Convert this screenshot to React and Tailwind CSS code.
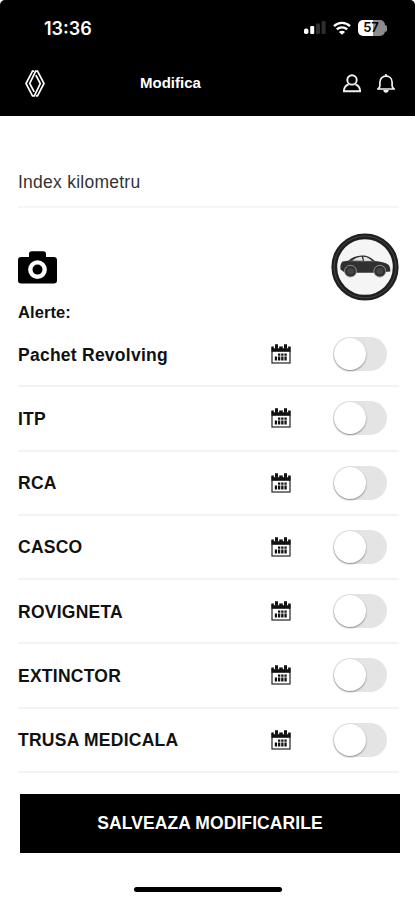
import { useState } from "react";

const alerts = [
    'Pachet Revolving',
    'ITP',
    'RCA',
    'CASCO',
    'ROVIGNETA',
    'EXTINCTOR',
    'TRUSA MEDICALA',
];

function SignalIcon() {
    return (
        <svg width="22" height="14" viewBox="0 0 22 14">
            <rect x="0" y="7.5" width="4.4" height="5.5" rx="1.8" fill="#fff" />
            <rect x="6.2" y="5" width="4" height="8" rx="1" fill="#fff" />
            <rect x="12" y="2.5" width="4" height="10.5" rx="1" fill="#2e2e2e" />
            <rect x="17.6" y="0" width="4" height="13" rx="1" fill="#2e2e2e" />
        </svg>
    );
}

function WifiIcon() {
    return (
        <svg width="18" height="14" viewBox="0 0 18 14" fill="none" stroke="#fff" strokeWidth="2.4">
            <path d="M1 5.2C5.4.8 12.6.8 17 5.2" />
            <path d="M3.8 8.4c2.8-2.7 7.600-2.700 10.400 0" />
            <path d="M9 13.800 5.900 10.900c1.600-1.500 4.600-1.500 6.200 0z" fill="#fff" stroke="none" />
        </svg>
    );
}

function Battery() {
    return (
        <div className="flex items-center">
            <div className="flex h-4 w-[27px] items-center justify-center rounded-[5px] bg-linear-to-r from-white from-57% to-[#8c8c8c] to-57% font-['Inter',sans-serif] text-[13px] font-semibold text-black">
                57
            </div>
            <div className="h-[7px] w-[2.5px] rounded-r-full bg-[#8c8c8c]" />
        </div>
    );
}

function Logo() {
    return (
        <svg width="20" height="27" viewBox="0 0 20 27" fill="none" stroke="#fff" strokeWidth="1.7">
            <path d="M9.200 1.100H7.500L1 13.500l6.500 12.400h1.800l6-12.400-4.500-8.300" />
            <path d="M10.800 25.900h1.700L19 13.500 12.500 1.100h-1.800l-6 12.400 4.500 8.300" />
        </svg>
    );
}

function UserIcon() {
    return (
        <svg width="18" height="19" viewBox="0 0 18 19" fill="none" stroke="#f2f2f2" strokeWidth="1.9">
            <circle cx="9" cy="5.9" r="4.7" />
            <path d="M5.600 10.400C2.800 11.500.9 13.900.9 17.300h16.200c0-3.400-1.900-5.800-4.700-6.900" strokeLinejoin="round" />
        </svg>
    );
}

function BellIcon() {
    return (
        <svg width="18" height="19" viewBox="0 0 18 19" fill="none" stroke="#f2f2f2" strokeWidth="1.7">
            <path d="M9 .2v2" strokeWidth="2.2" />
            <path d="M2.900 11.800V8.200C2.900 4.600 5.500 2.100 9 2.100s6.100 2.500 6.100 6.100v3.600c0 1.400.8 2.200 1.900 3.200H1c1.100-1 1.900-1.800 1.900-3.200z" />
            <path d="M6.300 16h5.400c0 1.600-1.100 2.700-2.700 2.700S6.300 17.600 6.300 16z" fill="#f2f2f2" stroke="none" />
        </svg>
    );
}

function CameraIcon() {
    return (
        <svg width="39" height="33" viewBox="0 0 39 33">
            <path d="M3 6h8V3c0-1.700 1.100-2.700 2.700-2.700h11.600C27 .3 28 1.300 28 3v3h8c1.800 0 3 1.200 3 3v20.700c0 1.700-1.200 2.800-3 2.800H3c-1.800 0-3-1.100-3-2.800V9c0-1.800 1.200-3 3-3z" fill="#000" />
            <circle cx="19.500" cy="18.600" r="7.200" fill="#000" stroke="#fff" strokeWidth="4.400" />
        </svg>
    );
}

function CarBadge() {
    return (
        <svg width="68" height="68" viewBox="0 0 68 68">
            <circle cx="34" cy="34" r="30.700" fill="#f5f5f5" stroke="#1f1f1f" strokeWidth="5.800" />
            <circle cx="34" cy="34" r="30.900" fill="none" stroke="#555" strokeWidth=".7" />
            <path d="M9.500 36.500c-.5-3.500.3-6.500 2-8l5.500-.8c3.500-3 8-5 14-5.200 6-.2 9.500 2.500 13 5.500 5.500.6 10.500 1.500 13.500 3.800 1.600 2 2 4.500 1.800 6.700L46 39.700H14z" fill="#303030" />
            <path d="M21 27.700c3.200-2.600 6.500-3.800 9.800-3.900l1 3.900zM33 27.900l-.7-4.100c3.700 0 6.300 1.800 8.700 4.200z" fill="#e4e4e0" />
            <path d="M17 27.800c9 .6 18 .6 27 .4" stroke="#777" strokeWidth=".6" fill="none" />
            <circle cx="19.500" cy="38.200" r="5.900" fill="#303030" stroke="#aaa89f" strokeWidth=".8" />
            <circle cx="48.800" cy="38.200" r="5.900" fill="#303030" stroke="#aaa89f" strokeWidth=".8" />
            <circle cx="19.500" cy="38.200" r="3.300" fill="#474541" />
            <circle cx="48.800" cy="38.200" r="3.300" fill="#474541" />
        </svg>
    );
}

function CalendarIcon() {
    return (
        <svg width="20" height="20" viewBox="0 0 20 20">
            <rect x="1" y="3.500" width="18" height="15.500" fill="#fff" stroke="#222" strokeWidth="1.200" />
            <path d="M.5 2.500h19v5.300H.5z" fill="#111" />
            <path d="M2.800 1.800h5.400v2.400H2.800zM11.800 1.800h5.400v2.400h-5.400z" fill="#fff" />
            <path d="M4 .3h3v4.500H4zM13 .3h3v4.500h-3z" fill="#111" />
            <path d="M7 9.500h2.300v2.300H7zM10.200 9.500h2.300v2.300h-2.300zM13.400 9.500h2.300v2.300h-2.300zM3.800 12.500h2.300v3.900H3.800zM7 12.500h2.300v3.900H7zM10.200 12.500h2.300v3.900h-2.300zM13.400 12.500h2.300v3.900h-2.300z" fill="#111" />
        </svg>
    );
}

function Toggle({ label, checked, onChange }) {
    return (
        <button
            type="button"
            role="switch"
            aria-label={label}
            aria-checked={checked}
            onClick={onChange}
            className={`flex h-[34px] w-[54px] items-center rounded-full px-px ${
                checked ? 'justify-end bg-black' : 'justify-start bg-[#e4e4e4]'
            }`}
        >
            <span className="size-8 rounded-full bg-white shadow-[0_1px_2px_rgba(0,0,0,0.4)]" />
        </button>
    );
}

function App() {
    const [active, setActive] = useState({});

    const handleToggle = (name) => {
        setActive((prev) => ({ ...prev, [name]: !prev[name] }));
    };

    return (
        <div className="h-[900px] w-[415px] overflow-hidden bg-white font-['Liberation_Sans',Arial,sans-serif] text-[#111]">
            <header className="h-[116px] rounded-t-[5px] bg-black text-white">
                <div className="flex h-14 items-center justify-between pr-[28px] pl-[44px]">
                    <span className="font-['Inter',sans-serif] text-[18px] font-semibold">13:36</span>
                    <div className="flex items-center gap-[7px]">
                        <SignalIcon />
                        <WifiIcon />
                        <Battery />
                    </div>
                </div>
                <div className="mt-[14px] grid grid-cols-[115px_1fr_115px] items-center pr-5 pl-[25px]">
                    <Logo />
                    <h1 className="text-[15px] font-bold">Modifica</h1>
                    <div className="flex justify-end gap-4">
                        <UserIcon />
                        <BellIcon />
                    </div>
                </div>
            </header>

            <main className="pr-4 pl-[18px]">
                <div className="mt-[43px] flex h-[49px] items-center border-b-2 border-[#f5f5f5] text-[17.500px] tracking-[0.250px] text-[#333]">
                    Index kilometru
                </div>

                <div className="mt-[25px] flex h-[68px] items-center justify-between">
                    <CameraIcon />
                    <CarBadge />
                </div>

                <h2 className="h-[22px] text-[16.500px] leading-[22px] font-bold tracking-[0.100px]">Alerte:</h2>

                <ul>
                    {alerts.map((name) => (
                        <li key={name} className="flex h-[64.250px] items-center border-b-2 border-[#f3f3f3] pr-3">
                            <span className="flex-1 pt-px text-[17.500px] font-bold tracking-[0.250px]">{name}</span>
                            <CalendarIcon />
                            <div className="ml-[42px]">
                                <Toggle label={name} checked={!!active[name]} onChange={() => handleToggle(name)} />
                            </div>
                        </li>
                    ))}
                </ul>
            </main>

            <button
                type="button"
                className="mt-[21px] ml-5 flex h-[59px] w-[380px] items-center justify-center bg-black text-[17.500px] font-bold tracking-[0.100px] text-white"
            >
                SALVEAZA MODIFICARILE
            </button>
            <div className="mx-auto mt-[34px] h-[5px] w-[148px] rounded-full bg-black" />
        </div>
    );
}

export default App;
